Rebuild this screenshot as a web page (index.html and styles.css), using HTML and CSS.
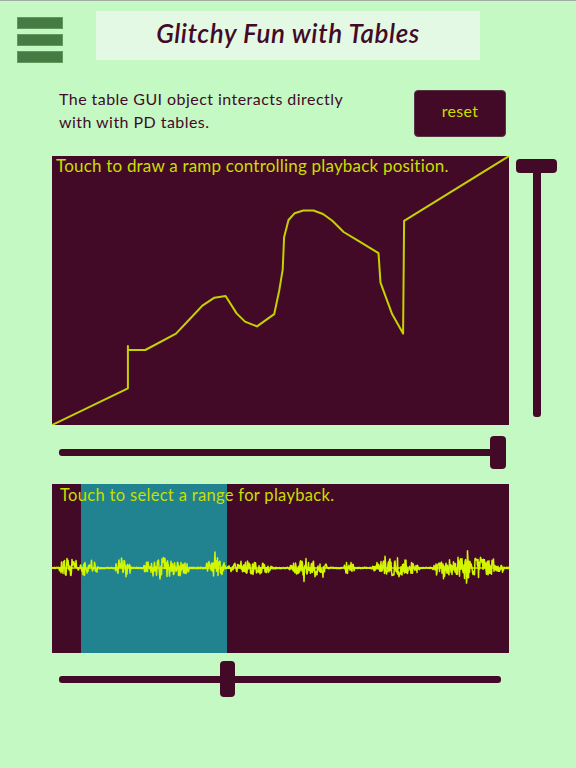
FILE: index.html
```html
<!DOCTYPE html>
<html lang="en">
<head>
<meta charset="utf-8">
<title>Glitchy Fun with Tables</title>
<link rel="stylesheet" href="styles.css">
</head>
<body>
<div class="page">
  <header class="header">
    <div class="menu" aria-label="menu">
      <span class="menu-bar"></span>
      <span class="menu-bar"></span>
      <span class="menu-bar"></span>
    </div>
    <div class="title-box"><h1 class="title">Glitchy Fun with Tables</h1></div>
  </header>

  <section class="intro">
    <p class="intro-text">The table GUI object interacts directly<br>with with PD tables.</p>
    <button class="reset-btn">reset</button>
  </section>

  <section class="ramp-row">
    <div class="table ramp-table">
      <svg class="table-svg" viewBox="0 0 457 269" preserveAspectRatio="none">
        <polyline class="ramp-line" points="0,269 75.9,232.3 75.9,189.9 75.9,194 93.3,194 124,177.6 135,166 150.4,149.6 162.4,141.7 173.6,140 184.6,157.4 193,165.6 205,170.4 222.2,158.1 227.3,134.2 230.7,113.7 232.1,81.2 236.5,64 242.7,57.2 251.2,54.5 261.5,54.5 271,58 280.3,64.8 291.6,76 306,84.6 326.5,97.2 328.5,126.6 340.1,158.1 351.1,177.6 352.1,64.8 457,0"/>
      </svg>
      <span class="table-label label-ramp">Touch to draw a ramp controlling playback position.</span>
    </div>
    <div class="vslider">
      <span class="vslider-knob"></span>
      <span class="vslider-track"></span>
    </div>
  </section>

  <div class="hslider hslider-one">
    <span class="hslider-track"></span>
    <span class="hslider-knob"></span>
  </div>

  <div class="table wave-table">
    <svg class="table-svg" viewBox="0 0 457 169" preserveAspectRatio="none">
      <rect class="selection" x="29" y="0" width="146" height="169"/>
      <line class="wave-base" x1="0" y1="84" x2="457" y2="84"/>
      <polyline id="wave" class="wave-line" points="0,84 457,84"/>
    </svg>
    <span class="table-label label-wave">Touch to select a range for playback.</span>
  </div>

  <div class="hslider hslider-two">
    <span class="hslider-track"></span>
    <span class="hslider-knob"></span>
  </div>
</div>
<script src="script.js"></script>
</body>
</html>
```

FILE: styles.css
```css
* { box-sizing: border-box; }

html, body {
  margin: 0;
  padding: 0;
}

body {
  background: #c4f9c4;
  border-top: 1px solid #a3aba3;
  font-family: Lato, "Liberation Sans", sans-serif;
  color: #430a28;
  width: 576px;
  height: 768px;
  overflow: hidden;
}

.page {
  display: flex;
  flex-direction: column;
}

/* header */
.header {
  display: flex;
  align-items: flex-start;
  height: 59px;
}

.menu {
  display: flex;
  flex-direction: column;
  gap: 5px;
  margin: 16px 0 0 17px;
}

.menu-bar {
  display: block;
  width: 46px;
  height: 12px;
  background: #467b44;
  border: 1px solid #5f995d;
}

.title-box {
  margin: 10px 0 0 33px;
  width: 384px;
  height: 49px;
  background: #e3f9e3;
  display: flex;
  align-items: center;
  justify-content: center;
}

.title {
  margin: 0 0 5px 0;
  font-size: 26px;
  font-style: italic;
  font-weight: 600;
  color: #430a28;
  letter-spacing: 0.6px;
}

/* intro */
.intro {
  display: flex;
  align-items: flex-start;
  margin-top: 30px;
  padding-left: 59px;
}

.intro-text {
  margin: -3px 0 0 0;
  font-size: 16px;
  line-height: 23px;
  letter-spacing: 0.45px;
  color: #430a28;
}

.reset-btn {
  margin-left: auto;
  margin-right: 70px;
  width: 92px;
  height: 47px;
  background: #430a28;
  border: 1px solid #5a3446;
  border-radius: 4px;
  color: #c8df00;
  font-family: Lato, "Liberation Sans", sans-serif;
  font-size: 16px;
  letter-spacing: 0.3px;
  padding: 0 0 6px 0;
}

/* tables */
.table {
  position: relative;
  background: #430a28;
  width: 457px;
  margin-left: 52px;
  overflow: hidden;
}

.table-svg {
  display: block;
  width: 100%;
  height: 100%;
}

.table-label {
  position: absolute;
  color: #c8df00;
  white-space: nowrap;
  line-height: 20px;
}

.ramp-row {
  display: flex;
  align-items: flex-start;
  margin-top: 19px;
}

.ramp-table {
  height: 269px;
}

.label-ramp {
  top: 0;
  left: 4px;
  font-size: 17px;
  letter-spacing: 0.2px;
}

.ramp-line {
  fill: none;
  stroke: #c3d200;
  stroke-width: 2;
  stroke-linejoin: round;
}

/* vertical slider */
.vslider {
  margin: 3px 0 0 7px;
  width: 41px;
  height: 258px;
  display: flex;
  flex-direction: column;
  align-items: center;
}

.vslider-knob {
  display: block;
  width: 41px;
  height: 14px;
  background: #430a28;
  border-radius: 4px;
  flex: none;
}

.vslider-track {
  display: block;
  width: 8px;
  flex: 1;
  background: #430a28;
  border-radius: 0 0 3px 3px;
  margin-left: 1px;
}

/* horizontal sliders */
.hslider {
  position: relative;
  margin-left: 59px;
  display: flex;
  align-items: center;
}

.hslider-track {
  display: block;
  height: 7px;
  background: #430a28;
  border-radius: 3px;
}

.hslider-knob {
  position: absolute;
  top: 0;
  width: 15px;
  background: #430a28;
  border-radius: 4px;
}

.hslider-one {
  margin-top: 11px;
  width: 447px;
  height: 33px;
}

.hslider-one .hslider-track { width: 440px; }

.hslider-one .hslider-knob {
  left: 431px;
  height: 33px;
  width: 16px;
}

.wave-table {
  margin-top: 15px;
  height: 169px;
}

.selection {
  fill: #20838f;
}

.wave-base {
  stroke: #cfee00;
  stroke-width: 1.6;
}

.wave-line {
  fill: none;
  stroke: #d2f600;
  stroke-width: 1.5;
  stroke-linejoin: round;
}

.label-wave {
  top: 1px;
  left: 8px;
  font-size: 16.5px;
  letter-spacing: 0.32px;
}

.hslider-two {
  margin-top: 8px;
  width: 442px;
  height: 36px;
}

.hslider-two .hslider-track { width: 442px; }

.hslider-two .hslider-knob {
  left: 161px;
  height: 36px;
}
```

FILE: script.js
```js
(function () {
  var line = document.getElementById('wave');
  var seed = 987654;
  function rnd() {
    seed |= 0;
    seed = (seed + 0x6D2B79F5) | 0;
    var t = Math.imul(seed ^ (seed >>> 15), 1 | seed);
    t = (t + Math.imul(t ^ (t >>> 7), 61 | t)) ^ t;
    return ((t ^ (t >>> 14)) >>> 0) / 4294967296;
  }
  var bursts = [
    [7, 27, 12], [28, 46, 10], [63, 79, 11], [91, 139, 12],
    [153, 174, 11], [175, 221, 8], [237, 276, 11], [291, 303, 9],
    [320, 368, 11], [380, 453, 13]
  ];
  var cy = 84;
  var pts = [];
  for (var x = 0; x <= 457; x += 0.5) {
    var env = 1.0;
    for (var i = 0; i < bursts.length; i++) {
      var b = bursts[i];
      if (x >= b[0] && x <= b[1]) {
        var t = (x - b[0]) / (b[1] - b[0]);
        env = Math.max(env, b[2] * Math.pow(Math.sin(Math.PI * t), 0.45));
      }
    }
    var v = (rnd() * 2 - 1) * env * (0.6 + 0.4 * rnd());
    if (env > 2 && rnd() < 0.07) v *= 1.5;
    pts.push(x.toFixed(2) + ',' + (cy + v).toFixed(2));
  }
  line.setAttribute('points', pts.join(' '));
})();
```
